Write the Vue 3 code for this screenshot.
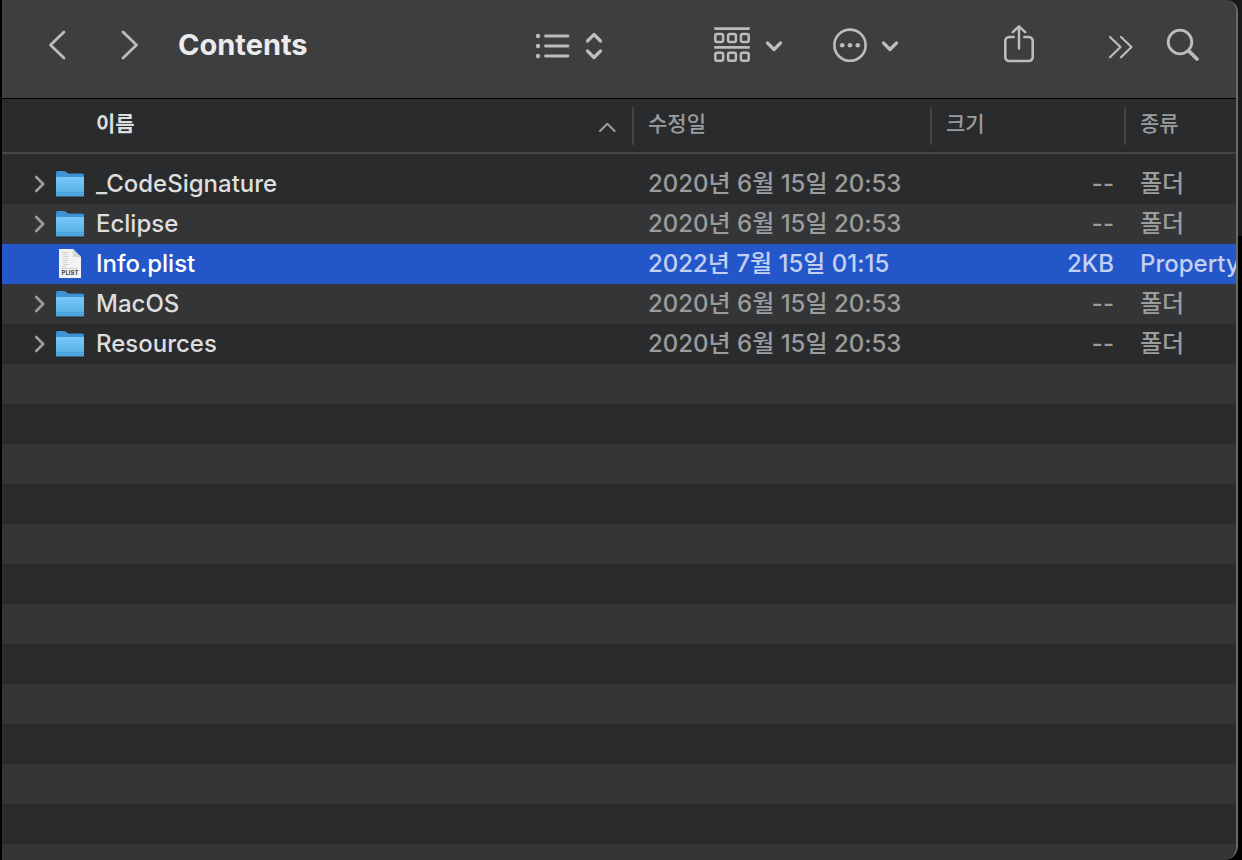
<script setup>
import { ref } from "vue";

const title = "Contents";

const files = ref([
  { name: "_CodeSignature", date: "2020년 6월 15일 20:53", size: "--", kind: "폴더", folder: true },
  { name: "Eclipse", date: "2020년 6월 15일 20:53", size: "--", kind: "폴더", folder: true },
  { name: "Info.plist", date: "2022년 7월 15일 01:15", size: "2KB", kind: "Property", folder: false },
  { name: "MacOS", date: "2020년 6월 15일 20:53", size: "--", kind: "폴더", folder: true },
  { name: "Resources", date: "2020년 6월 15일 20:53", size: "--", kind: "폴더", folder: true },
]);

const selected = ref("Info.plist");

const selectFile = (file) => {
  selected.value = file.name;
};
</script>

<template>
  <div class="desktop">
    <main class="finder">
      <header class="toolbar">
        <nav class="history">
          <button type="button" class="tool" aria-label="뒤로">
            <svg width="20" height="32" viewBox="0 0 20 32">
              <path d="M17 3 3.500 16 17 29" stroke-width="2.8" />
            </svg>
          </button>
          <button type="button" class="tool" aria-label="앞으로">
            <svg width="20" height="32" viewBox="0 0 20 32">
              <path d="M3 3 16.500 16 3 29" stroke-width="2.8" />
            </svg>
          </button>
        </nav>
        <h1 class="title">{{ title }}</h1>

        <div class="tools">
          <button type="button" class="tool view" aria-label="목록 보기">
            <svg width="36" height="40" viewBox="0 0 36 40">
              <g class="solid">
                <circle cx="3" cy="11" r="2.2" />
                <circle cx="3" cy="21" r="2.2" />
                <circle cx="3" cy="31" r="2.2" />
              </g>
              <path d="M10.5 11H33M10.5 21H33M10.5 31H33" stroke-width="2.8" />
            </svg>
            <svg width="20" height="40" viewBox="0 0 20 40">
              <path d="M3.5 16 10 9.5 16.5 16M3.5 26 10 32.5 16.5 26" stroke-width="3.2" />
            </svg>
          </button>
          <button type="button" class="tool group" aria-label="그룹">
            <svg width="36" height="40" viewBox="0 0 36 40">
              <path d="M1.3 3.600H34.700M1.300 22.400H34.700" stroke-width="2.6" />
              <g stroke-width="2.5">
                <rect x="1.3" y="9.1" width="7.8" height="8" rx="1.8" />
                <rect x="14.1" y="9.1" width="7.8" height="8" rx="1.8" />
                <rect x="26.9" y="9.1" width="7.8" height="8" rx="1.8" />
                <rect x="1.3" y="27.8" width="7.8" height="8" rx="1.8" />
                <rect x="14.1" y="27.8" width="7.8" height="8" rx="1.8" />
                <rect x="26.9" y="27.8" width="7.8" height="8" rx="1.8" />
              </g>
            </svg>
            <svg width="20" height="40" viewBox="0 0 20 40">
              <path d="M3.5 18 10 24.5 16.5 18" stroke-width="3.2" />
            </svg>
          </button>
          <button type="button" class="tool action" aria-label="동작">
            <svg width="36" height="40" viewBox="0 0 36 40">
              <circle cx="18" cy="20.2" r="15.6" stroke-width="2.6" />
              <g class="solid">
                <circle cx="10.2" cy="20.2" r="2.3" />
                <circle cx="18" cy="20.2" r="2.3" />
                <circle cx="25.8" cy="20.2" r="2.3" />
              </g>
            </svg>
            <svg width="20" height="40" viewBox="0 0 20 40">
              <path d="M3.5 18 10 24.5 16.5 18" stroke-width="3.2" />
            </svg>
          </button>
          <button type="button" class="tool share" aria-label="공유">
            <svg width="32" height="40" viewBox="0 0 32 40">
              <path
                d="M10.7 12H6a3.8 3.8 0 0 0-3.7 3.8v16.4A3.8 3.8 0 0 0 6 36h20a3.8 3.8 0 0 0 3.7-3.8V15.8A3.8 3.8 0 0 0 26 12h-4.7"
                stroke-width="2.6"
              />
              <path d="M16 23.5V2M9.8 7.2 16 1.4l6.2 5.8" stroke-width="2.5" />
            </svg>
          </button>
          <button type="button" class="tool more" aria-label="더 보기">
            <svg width="26" height="40" viewBox="0 0 26 40">
              <path d="M2 12 12.5 22 2 32.3M13 12 23.5 22 13 32.3" stroke-width="2.2" />
            </svg>
          </button>
          <button type="button" class="tool search" aria-label="검색">
            <svg width="34" height="40" viewBox="0 0 34 40">
              <circle cx="14" cy="17" r="11.8" stroke-width="2.8" />
              <path d="M22.8 26 31 34" stroke-width="3.8" />
            </svg>
          </button>
        </div>
      </header>

      <div class="list">
        <table class="files">
          <colgroup>
            <col />
            <col class="col-date" />
            <col class="col-size" />
            <col class="col-kind" />
          </colgroup>
          <thead>
            <tr>
              <th scope="col" aria-sort="ascending">
                <div class="head head-name">
                  <span>이름</span>
                  <svg class="sort" width="18" height="12" viewBox="0 0 18 12">
                    <path d="M2 10 9.3 2.8 16.6 10" stroke-width="2" />
                  </svg>
                </div>
              </th>
              <th scope="col"><div class="head divided">수정일</div></th>
              <th scope="col"><div class="head divided">크기</div></th>
              <th scope="col"><div class="head divided">종류</div></th>
            </tr>
          </thead>
          <tbody>
            <tr
              v-for="file in files"
              :key="file.name"
              :class="{ selected: file.name === selected }"
              @click="selectFile(file)"
            >
              <td>
                <div class="name-cell">
                  <button v-if="file.folder" type="button" class="expand" :aria-label="file.name + ' 펼치기'">
                    <svg width="12" height="18" viewBox="0 0 12 18">
                      <path d="M2.2 2 9.2 9 2.2 16" stroke-width="2.6" />
                    </svg>
                  </button>
                  <span v-else class="expand"></span>
                  <svg v-if="file.folder" class="icon" width="30" height="30" viewBox="0 0 30 30">
                    <defs>
                      <linearGradient :id="'front' + file.name" x1="0" y1="0" x2="0" y2="1">
                        <stop offset="0" stop-color="#79c9f7" />
                        <stop offset="1" stop-color="#51ace3" />
                      </linearGradient>
                    </defs>
                    <path
                      class="shade"
                      d="M1 5Q1 4 2.5 4H28Q29 4 29 6v21.500q0 1-1 1H2q-1 0-1-1z"
                    />
                    <path
                      class="back"
                      d="M1 3.500Q1 2 2.500 2H9q1 0 1.800.700l1.400 1.100q.7.600 1.800.600h13.500Q29 4.400 29 6v15H1z"
                    />
                    <path
                      :fill="'url(#front' + file.name + ')'"
                      d="M1 9q0-1 1-1h26q1 0 1 1v17.500q0 1-1 1H2q-1 0-1-1z"
                    />
                    <path class="crease" d="M1 23.500H29M1 25.500H29" />
                  </svg>
                  <svg v-else class="icon" width="30" height="30" viewBox="0 0 30 30">
                    <path class="paper" d="M4 0H18L26 8V29H4z" />
                    <path
                      class="print"
                      d="M7 3.500h7M7 5.500h6M8 7.500h6M8 9.500h4M8 11.500h5M7 13.500h5M8 15.500h6M7 17.500h4M7 19.500h16"
                    />
                    <path class="fold" d="M18 0 26 8H19q-1 0-1-1z" />
                    <text x="15" y="26" text-anchor="middle" class="badge">PLIST</text>
                  </svg>
                  <span class="name">{{ file.name }}</span>
                </div>
              </td>
              <td class="meta">{{ file.date }}</td>
              <td class="meta size">{{ file.size }}</td>
              <td class="meta">{{ file.kind }}</td>
            </tr>
          </tbody>
        </table>
      </div>
    </main>
  </div>
</template>

<style>
body {
  background: #000;
}
</style>

<style scoped>
.desktop {
  box-sizing: border-box;
  height: 100vh;
  padding: 0 4px 0 2px;
  background: linear-gradient(90deg, #000 2px, transparent 2px), linear-gradient(#1a1a1b 236px, #000 236px);
  font-family: Inter, "Noto Sans CJK KR", sans-serif;
  color: #dededf;
  overflow: hidden;
}

.finder {
  box-sizing: border-box;
  display: flex;
  flex-direction: column;
  height: 100%;
  border-right: 2px solid #68696a;
  border-radius: 0 12px 14px 0;
  background: #2a2b2d;
  overflow: hidden;
}

.toolbar {
  display: flex;
  align-items: center;
  box-sizing: border-box;
  height: 99px;
  padding: 0 36px 8px 45px;
  border-bottom: 1px solid #000;
  background: #3d3e40;
}

.history {
  display: flex;
  gap: 53px;
}

.title {
  flex: 1;
  margin: 0 0 0 38px;
  font-size: 29px;
  line-height: 40px;
  font-weight: 700;
  color: #ebebec;
}

.tools {
  display: flex;
  align-items: center;
}

.tool,
.expand {
  display: flex;
  padding: 0;
  border: 0;
  background: none;
  color: #bbbcbd;
}

.tool svg,
.expand svg,
.sort {
  fill: none;
  stroke: currentColor;
  stroke-linecap: round;
  stroke-linejoin: round;
}

.tool .solid {
  fill: currentColor;
  stroke: none;
}

.group {
  gap: 14px;
  margin-right: 48px;
}

.view {
  gap: 13px;
  margin-right: 110px;
}

.action {
  gap: 12px;
  margin-right: 103px;
}

.share {
  margin-right: 73px;
}

.more {
  margin-right: 32px;
}

.list {
  flex: 1;
  overflow: hidden;
  background: repeating-linear-gradient(#2a2b2d 0 40px, #343537 40px 80px) 0 65px no-repeat;
}

.files {
  width: 100%;
  table-layout: fixed;
  border-collapse: separate;
  border-spacing: 0;
}

.col-date {
  width: 298px;
}

.col-size {
  width: 194px;
}

.col-kind {
  width: 112px;
}

/* gap between the column heads and the first row */
tbody::before {
  content: "";
  display: block;
  height: 10px;
}

th,
td {
  padding: 0;
  text-align: left;
  white-space: nowrap;
}

th {
  height: 53px;
  border-bottom: 2px solid #444547;
}

.head {
  display: flex;
  align-items: center;
  box-sizing: border-box;
  height: 38px;
  padding-bottom: 4px;
  font-size: 21px;
  line-height: 24px;
  font-weight: 500;
  color: #9b9c9d;
}

.divided {
  padding-left: 14px;
  border-left: 2px solid #414244;
}

.head-name {
  justify-content: space-between;
  padding-left: 94px;
  padding-right: 16px;
  font-weight: 700;
  color: #dededf;
}

.sort {
  margin-top: 6px;
  color: #9b9c9d;
}

td {
  height: 40px;
  font-size: 24px;
  line-height: 38px;
  font-weight: 500;
}

.name-cell {
  display: flex;
  align-items: center;
  height: 40px;
  padding-left: 32px;
}

.expand {
  width: 12px;
  margin-right: 9px;
  color: #9b9c9d;
}

.icon {
  margin-right: 11px;
}

.shade {
  fill: #1f2022;
}

.back {
  fill: #3f93d3;
}

.crease {
  stroke: #459dd5;
  stroke-width: 1;
}

.paper {
  fill: #f3f3f3;
}

.print {
  stroke: #d2d2d2;
  stroke-width: 1;
}

.fold {
  fill: #d4d5d6;
}

.badge {
  font-size: 6px;
  font-weight: 700;
  fill: #444;
}

.meta {
  padding-left: 16px;
  color: #9b9c9d;
}

.size {
  padding-right: 10px;
  text-align: right;
}

.selected {
  background: #2357c9;
}

.selected .name {
  color: #fff;
}

.selected .meta {
  color: #c3d0f1;
}
</style>
